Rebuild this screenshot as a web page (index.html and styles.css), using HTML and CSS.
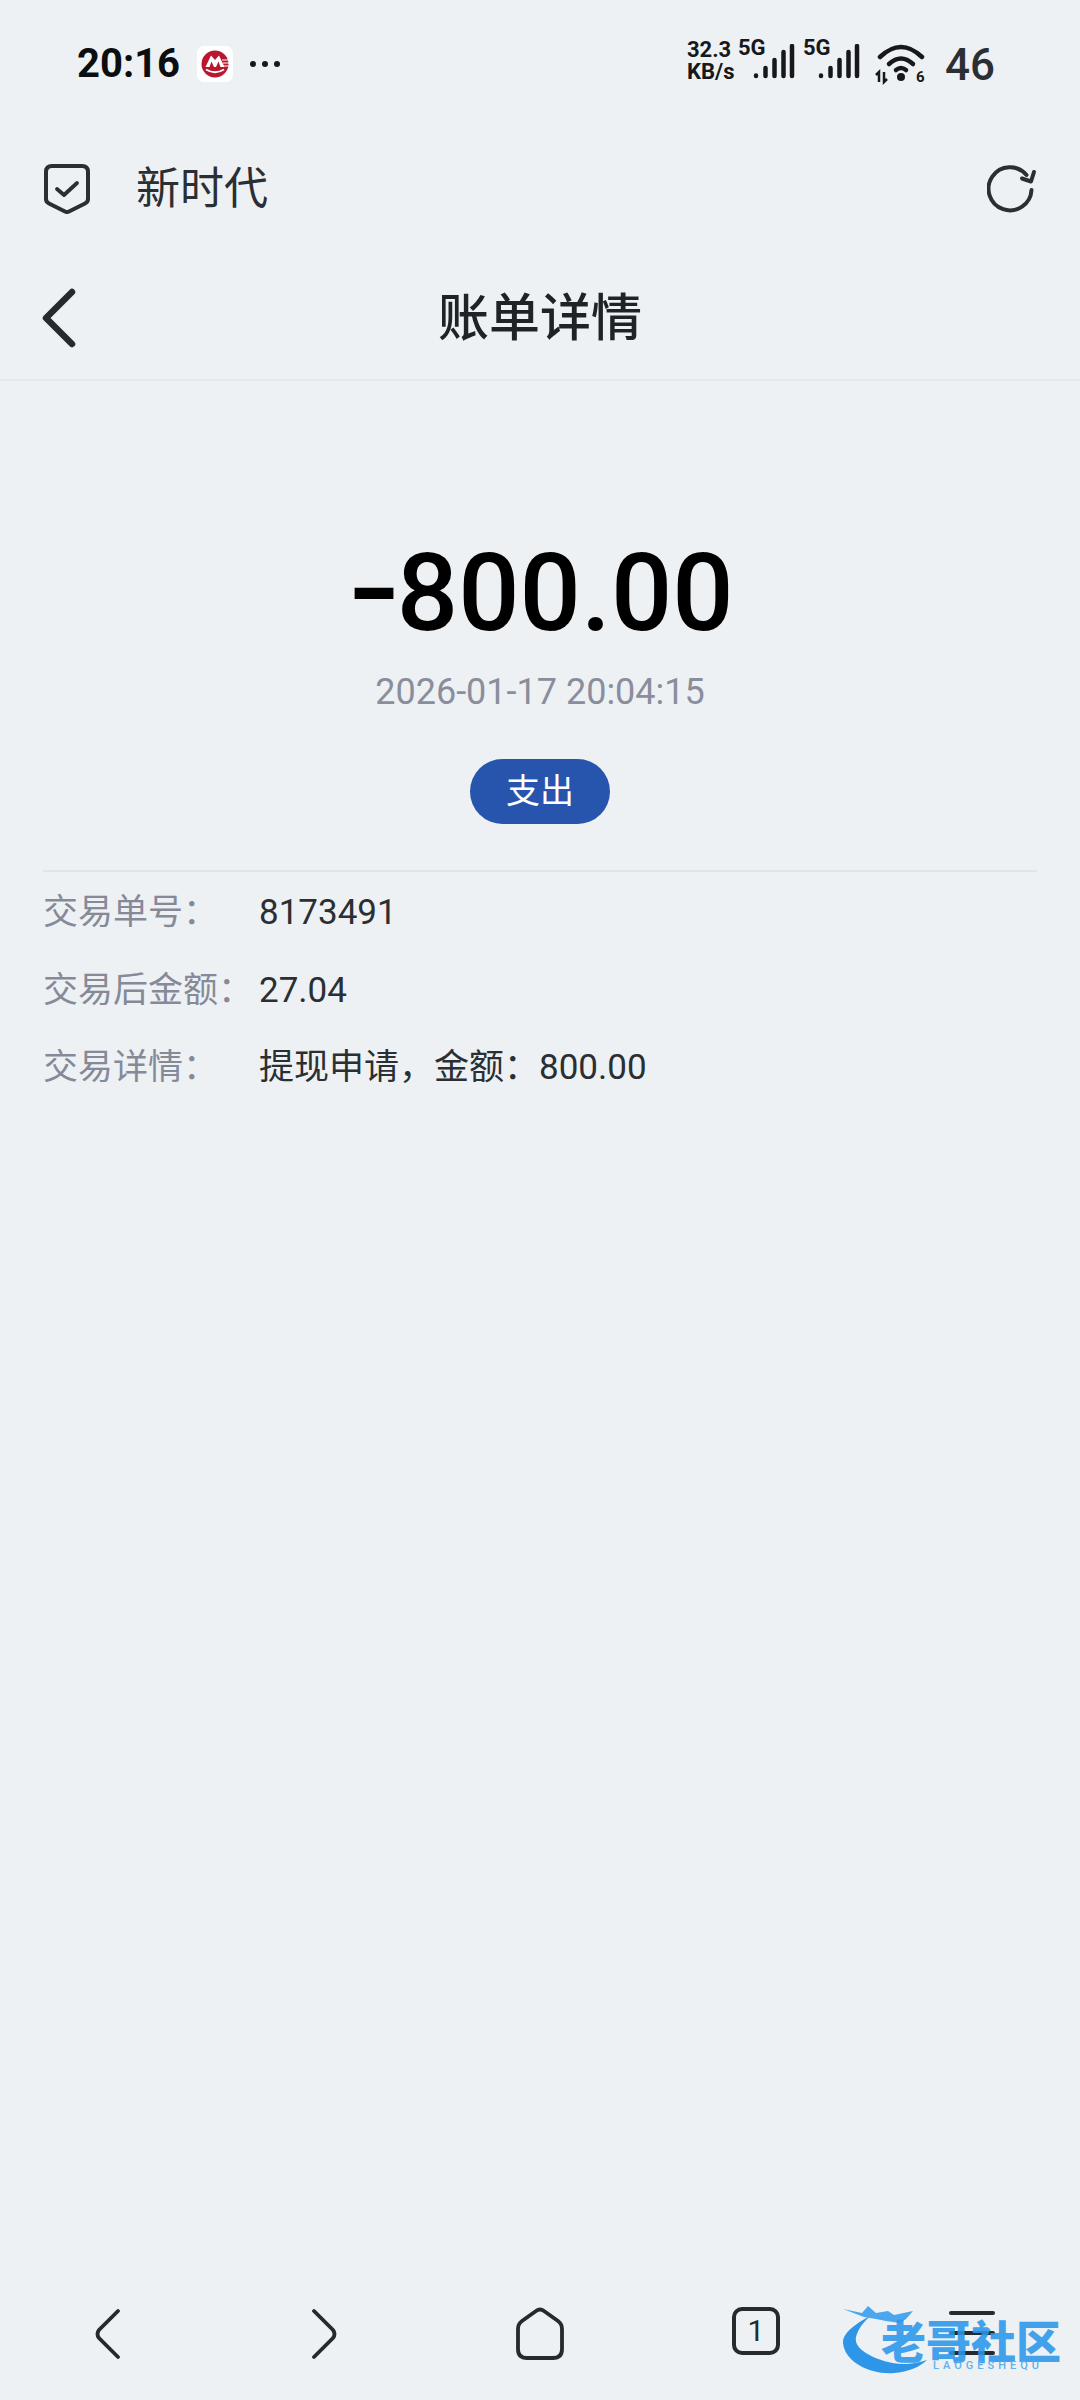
FILE: index.html
```html
<!DOCTYPE html>
<html lang="zh-CN">
<head>
  <meta charset="UTF-8">
  <meta name="viewport" content="width=device-width, initial-scale=1.0">
  <title>账单详情</title>
  <link rel="stylesheet" href="styles.css">
</head>
<body>

  <div class="status-bar">
    <div class="status-left">
      <span class="clock">20:16</span>
      <span class="app-badge">
        <svg width="36" height="36" viewBox="0 0 36 36">
          <rect width="36" height="36" rx="7" fill="#fff"/>
          <circle cx="18" cy="18" r="13.500" fill="#b8172f"/>
          <path d="M8.500 21L14 9.500L18 14L22 9.500L27.500 21H23.500L21.500 15.500L19 21H17L14.500 15.500L12.500 21Z" fill="#fff"/>
          <path d="M9 23.500Q18 29 27 23.500" fill="none" stroke="#fff" stroke-width="1.800"/>
          <path d="M25 14h7M26 17h6M26 20h6" stroke="#fff" stroke-width="1"/>
        </svg>
      </span>
      <span class="more-dots"><i></i><i></i><i></i></span>
    </div>
    <div class="status-right">
      <span class="net-speed"><b>32.3</b><b>KB/s</b></span>
      <span class="sim">
        <b class="sim-label">5G</b>
        <svg class="bars" width="42" height="36" viewBox="0 0 42 36">
          <g stroke="#16181b" stroke-width="4.500" stroke-linecap="round">
            <path d="M3 31.500v.5M12.500 24v8M21.500 16v16M30.500 8v24M39 2v30"/>
          </g>
        </svg>
      </span>
      <span class="sim">
        <b class="sim-label">5G</b>
        <svg class="bars" width="42" height="36" viewBox="0 0 42 36">
          <g stroke="#16181b" stroke-width="4.500" stroke-linecap="round">
            <path d="M3 31.500v.5M12.500 24v8M21.500 16v16M30.500 8v24M39 2v30"/>
          </g>
        </svg>
      </span>
      <svg class="wifi" width="54" height="46" viewBox="0 0 54 46">
        <g fill="none" stroke="#16181b" stroke-width="4.500" stroke-linecap="round">
          <path d="M6 13Q27 -7 48 13"/>
          <path d="M15 20Q27 9 39 20"/>
          <path d="M22 26Q27 22 32 26"/>
        </g>
        <circle cx="27" cy="33" r="4" fill="#16181b"/>
        <path d="M5 38V28L2 31M10 28V38L13 35" fill="none" stroke="#16181b" stroke-width="2.500"/>
        <text x="42" y="38" class="wifi-num">6</text>
      </svg>
      <span class="battery">46</span>
    </div>
  </div>

  <div class="site-bar">
    <div class="site-left">
      <svg width="46" height="50" viewBox="0 0 46 50">
        <path d="M8 2H38Q44 2 44 8V35Q44 38 41 39.500L25 47.500Q23 48.500 21 47.500L5 39.500Q2 38 2 35V8Q2 2 8 2Z" fill="none" stroke="#2b2e32" stroke-width="4"/>
        <path d="M13 25L20 31L33 19" fill="none" stroke="#2b2e32" stroke-width="3.800" stroke-linecap="round" stroke-linejoin="round"/>
      </svg>
      <span class="site-name">新时代</span>
    </div>
    <svg width="50" height="50" viewBox="0 0 50 50">
      <path d="M39.500 11A21.500 21.500 0 1 0 44.500 26" fill="none" stroke="#2b2e32" stroke-width="4" stroke-linecap="round"/>
      <path d="M47 8L44 17.500L35 14.500" fill="none" stroke="#2b2e32" stroke-width="4" stroke-linecap="round" stroke-linejoin="round"/>
    </svg>
  </div>

  <div class="nav-bar">
    <svg class="nav-back" width="36" height="60" viewBox="0 0 36 60">
      <path d="M31 4L5 30L31 56" fill="none" stroke="#26292d" stroke-width="6.500" stroke-linecap="round" stroke-linejoin="round"/>
    </svg>
    <h1 class="nav-title">账单详情</h1>
  </div>

  <main class="bill">
    <div class="bill-head">
      <div class="amount"><span class="amount-sign">-</span>800.00</div>
      <div class="bill-time">2026-01-17 20:04:15</div>
      <div class="bill-type">支出</div>
    </div>
    <div class="bill-rows">
      <div class="bill-row">
        <span class="row-label">交易单号&#xFF1A;</span>
        <span class="row-value">8173491</span>
      </div>
      <div class="bill-row">
        <span class="row-label">交易后金额&#xFF1A;</span>
        <span class="row-value">27.04</span>
      </div>
      <div class="bill-row">
        <span class="row-label">交易详情&#xFF1A;</span>
        <span class="row-value">提现申请&#xFF0C;金额&#xFF1A;800.00</span>
      </div>
    </div>
  </main>

  <div class="bottom-bar">
    <svg width="28" height="54" viewBox="0 0 28 54">
      <path d="M24 4L5 23Q2 27 5 31L24 50" fill="none" stroke="#26292d" stroke-width="3.800" stroke-linecap="round"/>
    </svg>
    <svg width="28" height="54" viewBox="0 0 28 54">
      <path d="M4 4L23 23Q26 27 23 31L4 50" fill="none" stroke="#26292d" stroke-width="3.800" stroke-linecap="round"/>
    </svg>
    <svg width="52" height="54" viewBox="0 0 52 54">
      <path d="M22 4Q26 1 30 4L44 14Q48 17 48 22V42Q48 51 39 51H13Q4 51 4 42V22Q4 17 8 14Z" fill="none" stroke="#26292d" stroke-width="3.800"/>
    </svg>
    <span class="tab-count">1</span>
    <span class="menu-icon"><i></i><i></i><i></i></span>

    <div class="watermark">
      <svg class="watermark-logo" width="230" height="72" viewBox="0 0 230 72">
        <path d="M30 10C10 20 0 30 1 38C3 58 30 70 52 68C66 67 78 62 85 55C70 60 56 60 42 56C24 50 12 42 14 32C16 24 22 16 30 10Z" fill="#2d96e8"/>
        <path d="M1 4L20 8L26 1L34 8L46 6L52 10L71 6L64 14L58 18L44 16L34 14L22 12Z" fill="#4aa6ee"/>
      </svg>
      <span class="watermark-name">老哥社区</span>
      <span class="watermark-sub">LAOGESHEQU</span>
    </div>
  </div>

</body>
</html>
```

FILE: styles.css
```css
body, html {
  margin: 0;
  padding: 0;
  height: 100%;
}

body {
  width: 1080px;
  height: 2400px;
  display: flex;
  flex-direction: column;
  background-color: #edf1f4;
  color: #26292d;
  font-family: "Roboto", "Noto Sans CJK SC", sans-serif;
  overflow: hidden;
}

/* status bar */
.status-bar {
  height: 126px;
  box-sizing: border-box;
  padding: 39px 85px 0 77px;
  display: flex;
  justify-content: space-between;
  align-items: flex-start;
}

.status-left {
  display: flex;
  align-items: center;
  gap: 17px;
  margin-top: 2px;
}

.clock {
  font-size: 40px;
  line-height: 46px;
  font-weight: 700;
  color: #0c0d0e;
}

.app-badge {
  display: flex;
}

.more-dots {
  display: flex;
  gap: 6px;
}

.more-dots i {
  width: 6px;
  height: 6px;
  border-radius: 50%;
  background-color: #16181b;
}

.status-right {
  display: flex;
  align-items: flex-end;
}

.net-speed {
  display: flex;
  flex-direction: column;
  width: 51px;
  font-size: 22px;
  line-height: 22px;
  color: #16181b;
}

.net-speed b, .sim-label {
  font-weight: 700;
}

.sim {
  display: flex;
  align-items: flex-end;
  width: 65px;
  position: relative;
}

.sim-label {
  position: absolute;
  left: 0;
  top: -7px;
  font-size: 22px;
  line-height: 22px;
  color: #16181b;
}

.bars {
  margin-left: 15px;
  margin-bottom: 3px;
}

.wifi {
  margin-left: 6px;
  margin-bottom: -7px;
}

.wifi-num {
  font-size: 15px;
  font-weight: 700;
  fill: #16181b;
}

.battery {
  margin-left: 17px;
  margin-bottom: -4px;
  font-size: 44px;
  line-height: 44px;
  font-weight: 500;
  color: #2b2e32;
}

/* site bar */
.site-bar {
  height: 126px;
  box-sizing: border-box;
  padding: 0 43px 0 44px;
  display: flex;
  justify-content: space-between;
  align-items: center;
}

.site-left {
  display: flex;
  align-items: center;
  gap: 46px;
}

.site-name {
  font-size: 44px;
  line-height: 50px;
  color: #2b2e32;
}

/* page title */
.nav-bar {
  height: 129px;
  box-sizing: border-box;
  padding-top: 6px;
  border-bottom: 2px solid #e6eaee;
  display: flex;
  align-items: center;
  justify-content: center;
  position: relative;
}

.nav-back {
  position: absolute;
  left: 41px;
  top: 36px;
}

.nav-title {
  margin: 0;
  font-size: 51px;
  line-height: 60px;
  font-weight: 500;
  color: #1f2226;
}

/* bill */
.bill {
  flex: 1;
  padding: 0 43px;
}

.bill-head {
  height: 491px;
  box-sizing: border-box;
  padding-top: 149px;
  border-bottom: 2px solid #e0e4e8;
  display: flex;
  flex-direction: column;
  align-items: center;
}

.amount {
  font-size: 108px;
  line-height: 126px;
  font-weight: 500;
  color: #000;
}

.amount-sign {
  font-family: "Inter", sans-serif;
  font-size: 120px;
  line-height: 0;
  margin-right: -5px;
}

.bill-time {
  margin-top: 15px;
  font-size: 36px;
  line-height: 42px;
  color: #8a8e9c;
}

.bill-type {
  margin-top: 46px;
  width: 140px;
  height: 65px;
  border-radius: 33px;
  background-color: #2755ad;
  color: #fff;
  font-size: 34px;
  line-height: 65px;
  text-align: center;
}

.bill-rows {
  padding-top: 18px;
  display: flex;
  flex-direction: column;
  gap: 31.5px;
}

.bill-row {
  display: flex;
  font-size: 35px;
  line-height: 46px;
}

.row-label {
  width: 216px;
  color: #868a98;
}

.row-value {
  color: #2b2e32;
}

/* browser bottom bar */
.bottom-bar {
  height: 120px;
  box-sizing: border-box;
  padding-top: 27px;
  display: grid;
  grid-template-columns: repeat(5, 1fr);
  justify-items: center;
  align-items: start;
  position: relative;
}

.tab-count {
  width: 48px;
  height: 48px;
  box-sizing: border-box;
  border: 4px solid #26292d;
  border-radius: 10px;
  font-size: 30px;
  line-height: 40px;
  text-align: center;
}

.menu-icon {
  width: 46px;
  height: 44px;
  margin-top: 4px;
  display: flex;
  flex-direction: column;
  justify-content: space-between;
}

.menu-icon i {
  height: 4px;
  border-radius: 2px;
  background-color: #26292d;
}

.watermark {
  position: absolute;
  left: 842px;
  top: 25px;
  width: 230px;
  height: 72px;
}

.watermark-logo {
  position: absolute;
  left: 0;
  top: 0;
}

.watermark-name {
  position: absolute;
  left: 39px;
  top: 16px;
  font-size: 45px;
  line-height: 46px;
  font-weight: 900;
  white-space: nowrap;
  color: #2b97ea;
  opacity: 0.88;
}

.watermark-sub {
  position: absolute;
  left: 91px;
  top: 54px;
  font-size: 11px;
  line-height: 13px;
  font-weight: 500;
  letter-spacing: 4px;
  white-space: nowrap;
  color: #5fb0ec;
}
```
